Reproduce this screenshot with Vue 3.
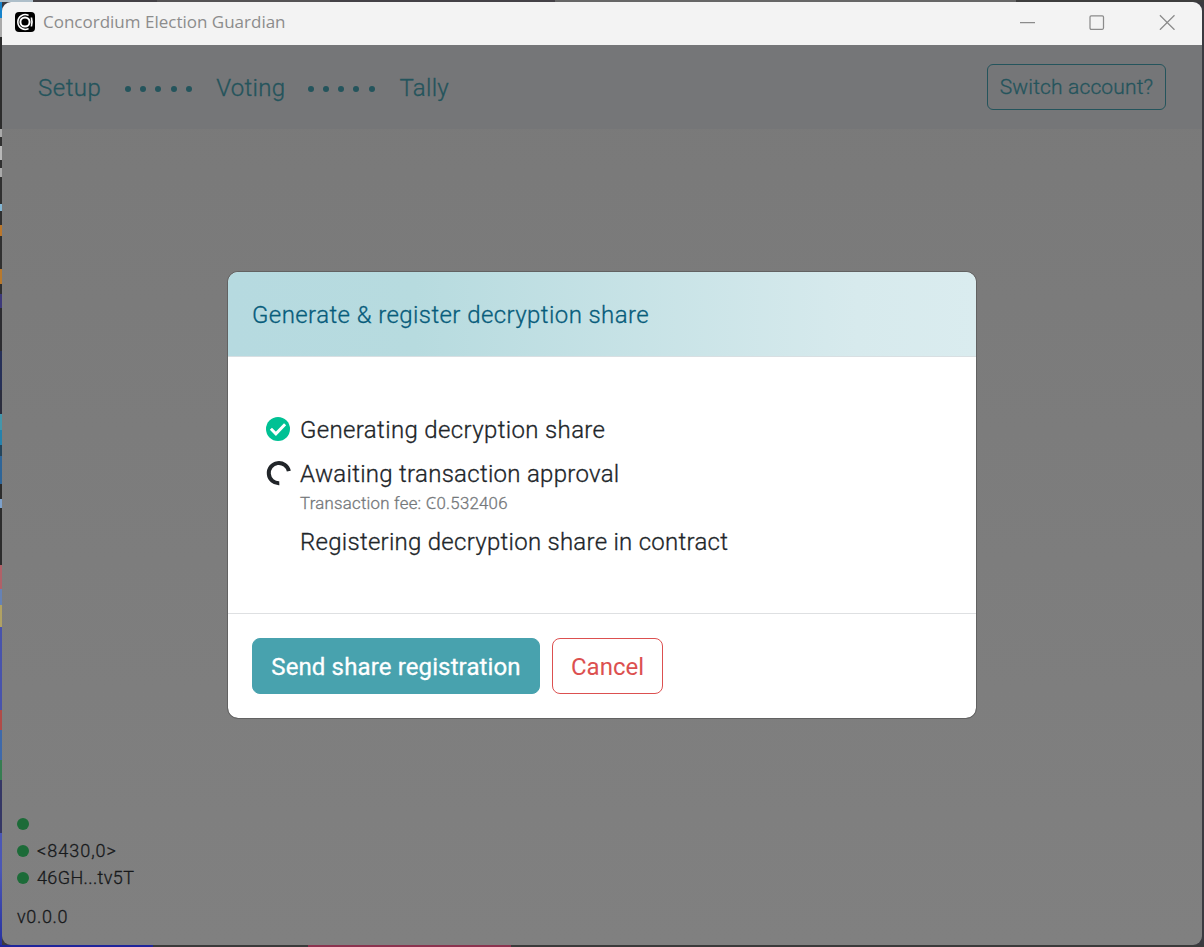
<script setup>
const steps = [
  { label: 'Generating decryption share', state: 'done', cls: 's1' },
  { label: 'Awaiting transaction approval', state: 'busy', cls: 's2', note: 'Transaction fee: Ͼ0.532406' },
  { label: 'Registering decryption share in contract', state: 'idle', cls: 's3' },
]
const statuses = [
  { text: '', cls: '' },
  { text: '<8430,0>', cls: 'block' },
  { text: '46GH...tv5T', cls: 'account' },
]
</script>

<template>
  <div class="desktop">
    <div class="window">
      <div class="titlebar">
        <svg class="logo" width="20" height="20" viewBox="0 0 20 20">
          <rect width="20" height="20" rx="4" fill="#000" />
          <path d="M13.6 3.4A7.4 7.4 0 1 0 13.6 16.6" fill="none" stroke="#fff" stroke-width="1.6" />
          <circle cx="10" cy="10" r="4.6" fill="none" stroke="#fff" stroke-width="2" />
          <path d="M15.6 5.4h1.6q1.4 4.6 0 9.2h-1.6q1.2-4.6 0-9.2z" fill="#fff" />
        </svg>
        <span class="title">Concordium Election Guardian</span>
        <div class="controls">
          <svg width="16" height="16" viewBox="0 0 16 16"><path d="M1 8.5h15" /></svg>
          <svg width="16" height="16" viewBox="0 0 16 16"><rect x="1" y="1.8" width="13.5" height="13.5" rx="1.2" /></svg>
          <svg width="16" height="16" viewBox="0 0 16 16"><path d="M.9 1.2l14.6 14.6M15.5 1.2L.9 15.8" /></svg>
        </div>
      </div>

      <div class="content">
        <header class="nav">
          <span class="setup">Setup</span>
          <span class="dots"><i v-for="n in 5" :key="n" /></span>
          <span class="voting">Voting</span>
          <span class="dots"><i v-for="n in 5" :key="n" /></span>
          <span class="tally">Tally</span>
          <button class="switch">Switch account?</button>
        </header>

        <main class="stage">
          <section class="modal">
            <div class="modal-head"><span>Generate &amp; register decryption share</span></div>
            <div class="modal-body">
              <div v-for="s in steps" :key="s.label" class="step">
                <div class="icon">
                  <svg v-if="s.state === 'done'" width="24" height="24" viewBox="0 0 24 24">
                    <circle cx="12" cy="12" r="12" fill="#00c194" />
                    <path d="M4.9 11.7l5 5.1 9.2-9.6" fill="none" stroke="#fff" stroke-width="3" />
                  </svg>
                  <svg v-else-if="s.state === 'busy'" class="spin" width="26" height="26" viewBox="0 0 26 26">
                    <path d="M13.3 23.2A10.1 10.1 0 1 1 22.8 11.2" fill="none" stroke="#212529" stroke-width="4" />
                  </svg>
                </div>
                <div class="text">
                  <div class="label"><span :class="s.cls">{{ s.label }}</span></div>
                  <div v-if="s.note" class="note"><span>{{ s.note }}</span></div>
                </div>
              </div>
            </div>
            <div class="modal-foot">
              <button class="send">Send share registration</button>
              <button class="cancel">Cancel</button>
            </div>
          </section>
        </main>

        <footer class="status">
          <div v-for="(s, i) in statuses" :key="i" class="row"><i /><span :class="s.cls">{{ s.text }}</span></div>
          <div class="version"><span>v0.0.0</span></div>
        </footer>
      </div>
    </div>
  </div>
</template>

<style>
body { margin: 0; overflow: hidden; }
</style>

<style scoped>
* { box-sizing: border-box; }
.desktop {
  width: 1204px;
  height: 947px;
  padding: 2px;
  font-family: Roboto, "Noto Sans", "DejaVu Sans", sans-serif;
  font-weight: 300;
  background:
    linear-gradient(90deg, #aebfca 0 33px, #444146 33px 157px, #555355 157px 330px, #444146 330px 555px, #666 555px 1016px, #3d3d3d 1016px) 0 0 / 100% 2px no-repeat,
    linear-gradient(90deg, #1f259b 0 153px, #3a3a3a 153px 308px, #8c334f 308px 511px, #3a3a3a 511px) 0 100% / 100% 2px no-repeat,
    linear-gradient(#1683cb 0 18px, #aaa 18px 37px, #2c2c2c 37px 129px, #aaa 129px 137px, #303030 137px 146px, #b8b8b8 146px 160px, #303030 160px 168px, #aaa 168px 177px, #303030 177px 204px, #83b7d5 204px 211px, #303030 211px 225px, #bb772c 225px 236px, #303030 236px 269px, #b8792d 269px 284px, #303030 284px 294px, #3d397a 294px 308px, #2c2c30 308px 351px, #263058 351px 390px, #2b2d3d 390px 414px, #4496ab 414px 430px, #2582ad 430px 445px, #24455c 445px 456px, #2e6598 456px 484px, #2c2c2c 484px 499px, #7da1cb 499px 508px, #2c2c2c 508px 565px, #b06168 565px 589px, #6682b5 589px 605px, #b1a263 605px 627px, #4853ac 627px 710px, #b04b48 710px 730px, #3e69aa 730px 760px, #357d51 760px 780px, #353765 780px 833px, #4b57b5 833px 870px, #2630a0) 0 0 / 2px 100% no-repeat,
    #3b3a40;
}
.window {
  width: 1200px;
  height: 943px;
  border-radius: 9px;
  overflow: hidden;
  display: flex;
  flex-direction: column;
}
.titlebar {
  height: 43px;
  background: #f3f3f3;
  display: flex;
  align-items: center;
  padding: 0 27px 3px 13px;
}
.logo { margin-right: 8px; }
.title {
  font-family: "Open Sans", "Noto Sans", sans-serif;
  font-size: 17px;
  font-weight: 400;
  line-height: 24px;
  color: #8c8c8c;
}
.controls { display: flex; gap: 54px; margin-left: auto; }
.controls path, .controls rect { fill: none; stroke: #8b8b8b; stroke-width: 1.25; }
.content {
  flex: 1;
  display: flex;
  flex-direction: column;
  background: linear-gradient(#797979, #808080);
}
.nav, .modal-head, .label, .send, .note, .status { -webkit-text-stroke: .3px currentColor; }
.nav {
  height: 84px;
  background: #757678;
  color: #24545c;
  display: flex;
  align-items: center;
  padding: 2px 36px 0;
  font-size: 24px;
  line-height: 36px;
}
.nav > span { white-space: nowrap; }
.setup { width: 87px; letter-spacing: .5px; }
.voting { width: 91.5px; letter-spacing: .3px; }
.dots { display: flex; gap: 9.2px; margin-top: 2px; }
.dots i { width: 6px; height: 6px; border-radius: 50%; background: #24545c; }
.voting { margin-left: 24.5px; }
.tally { margin-left: 25px; letter-spacing: .3px; }
button { font-family: inherit; margin: 0; padding: 0; white-space: nowrap; }
.switch {
  width: 179px;
  height: 46px;
  margin: -2px 0 0 auto;
  background: transparent;
  border: 1px solid #24545c;
  border-radius: 6px;
  color: #24545c;
  font-size: 21px;
  font-weight: 300;
  letter-spacing: .15px;
  -webkit-text-stroke: .3px currentColor;
}
.stage { flex: 1; display: flex; justify-content: center; padding-top: 142px; }
.modal {
  width: 750px;
  height: 448px;
  border: 1px solid #626262;
  border-radius: 11px;
  background: #fff;
  background-clip: padding-box;
  overflow: hidden;
  display: flex;
  flex-direction: column;
}
.modal-head {
  height: 85px;
  padding: 25px 24px;
  border-bottom: 1px solid #d8dfe2;
  background: linear-gradient(90deg, #b6dae0 0%, #b7dbdf 25%, #d7eaed 84%, #daecef 100%);
  color: #075c7b;
  font-size: 24px;
  line-height: 36px;
  letter-spacing: .42px;
}
.modal-body { height: 256px; padding: 55px 38px 0; color: #212529; }
.step { display: flex; margin-bottom: 8px; }
.icon { width: 34px; padding-top: 5px; }
.icon svg { display: block; }
.icon .spin { margin-top: -1px; }
.label { font-size: 24px; line-height: 36px; }
.s1 { letter-spacing: .36px; }
.s2 { letter-spacing: .29px; }
.s3 { letter-spacing: .27px; }
.note { height: 24px; font-size: 16.8px; line-height: 22px; color: #74777a; letter-spacing: .26px; }
.modal-foot {
  flex: 1;
  border-top: 1px solid #dee0e2;
  padding: 24px;
  display: flex;
  gap: 12px;
}
.send, .cancel { height: 56px; border-radius: 8px; font-size: 24px; line-height: 36px; padding-top: 1px; }
.send { width: 288px; border: 1px solid #48a2ae; background: #48a2ae; color: #fff; font-weight: 400; letter-spacing: .13px; }
.cancel { width: 111px; border: 1px solid #dc5050; background: #fff; color: #dc5050; font-weight: 400; }
.status { padding: 0 15px 15px; color: #17191b; font-size: 18px; line-height: 27px; }
.row { display: flex; align-items: center; height: 27px; }
.row i { width: 12px; height: 12px; margin-right: 8px; border-radius: 50%; background: #1c6b38; }
.block { letter-spacing: 1px; }
.account { letter-spacing: .38px; }
.version { margin-top: 12px; letter-spacing: .65px; }
</style>
